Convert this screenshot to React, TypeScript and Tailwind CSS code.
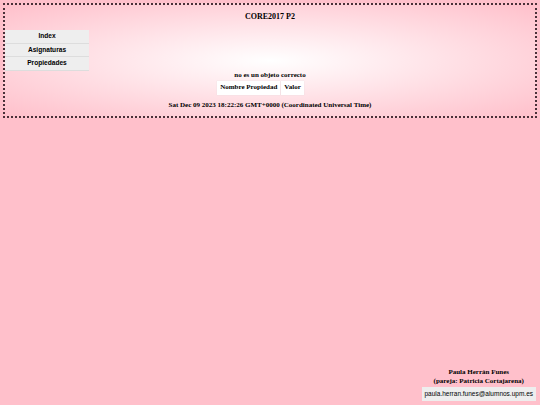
import React from 'react';

const serif = { fontFamily: '"Liberation Serif", "Times New Roman", serif' };
const sans = { fontFamily: '"Liberation Sans", Arial, sans-serif' };

const menu = ['Index', 'Asignaturas', 'Propiedades'];

export default function App() {
  return (
    <div className="min-h-screen bg-[#ffc0cb] flex flex-col text-black" style={serif}>
      {/* Header */}
      <header className="m-[3px] border-2 border-dotted border-[#4a3038] bg-[radial-gradient(ellipse_at_center,#ffffff_0%,#ffc0cb_100%)] pb-[6px]">
        <h1 className="text-center text-[8px] font-bold leading-[12px] pt-[6px]">CORE2017 P2</h1>

        <nav className="w-[84px] mt-[7px]" style={sans}>
          {menu.map((item) => (
            <div
              key={item}
              className="h-[13.5px] flex items-center justify-center bg-[#eeeeee] border-b border-[#dddddd] text-[6.6px] font-bold"
            >
              {item}
            </div>
          ))}
        </nav>

        <div className="flex flex-col items-center">
          <p className="text-[7px] font-bold leading-[9px]">no es un objeto correcto</p>
          <table className="border-separate border-spacing-[1px] text-[7px] font-bold mr-[19px]">
            <tbody>
              <tr>
                <td className="bg-white px-[3px] h-[14px] shadow-[0_0_1px_#ddd]">Nombre Propiedad</td>
                <td className="bg-white px-[3px] h-[14px] shadow-[0_0_1px_#ddd]">Valor</td>
              </tr>
            </tbody>
          </table>
          <p className="text-[7px] font-bold leading-[9px] mt-[5px]">
            Sat Dec 09 2023 18:22:26 GMT+0000 (Coordinated Universal Time)
          </p>
        </div>
      </header>

      {/* Footer */}
      <footer className="mt-auto self-end mr-[4px] mb-[4px] flex flex-col items-center">
        <p className="text-[7px] font-bold leading-[9px]">Paula Herrán Funes</p>
        <p className="text-[7px] font-bold leading-[9px]">(pareja: Patricia Cortajarena)</p>
        <div className="mt-[1px] bg-[#eeeeee] px-[3px] h-[14px] flex items-center text-[6.5px]" style={sans}>
          paula.herran.funes@alumnos.upm.es
        </div>
      </footer>
    </div>
  );
}
